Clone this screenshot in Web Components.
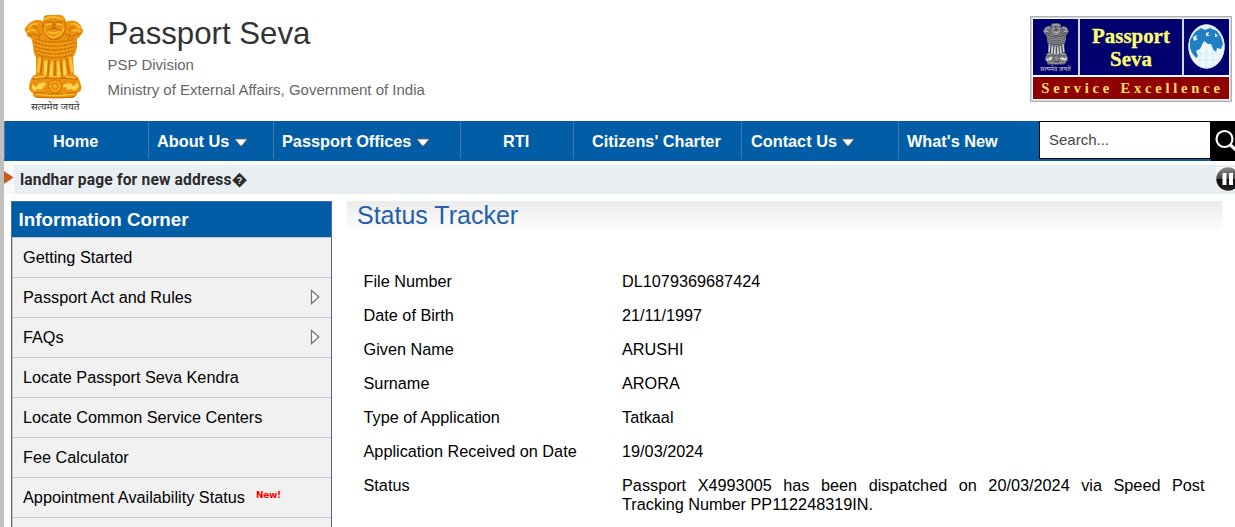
<!DOCTYPE html>
<html lang="en">
<head>
<meta charset="utf-8">
<title>Passport Seva</title>
<style>
    html, body { margin: 0; height: 100%; overflow: hidden; }
    body { background: #fff; font-family: "Liberation Sans", Arial, sans-serif; }
</style>
</head>
<body>
<passport-page>
    <site-header slot="header"></site-header>
    <site-nav slot="nav">
        <nav-item style="width:144px" pad="48">Home</nav-item>
        <nav-item style="width:125px" pad="8" menu>About Us</nav-item>
        <nav-item style="width:187px" pad="8" menu>Passport Offices</nav-item>
        <nav-item style="width:113px" pad="42">RTI</nav-item>
        <nav-item style="width:168px" pad="18">Citizens' Charter</nav-item>
        <nav-item style="width:157px" pad="9" menu>Contact Us</nav-item>
        <nav-item style="width:141px" pad="8">What's New</nav-item>
        <site-search slot="search"></site-search>
    </site-nav>
    <news-ticker slot="ticker">landhar page for new address�</news-ticker>
    <info-corner slot="side" heading="Information Corner">
        <info-link>Getting Started</info-link>
        <info-link more>Passport Act and Rules</info-link>
        <info-link more>FAQs</info-link>
        <info-link>Locate Passport Seva Kendra</info-link>
        <info-link>Locate Common Service Centers</info-link>
        <info-link>Fee Calculator</info-link>
        <info-link fresh>Appointment Availability Status</info-link>
        <info-link></info-link>
    </info-corner>
    <status-tracker slot="main">
        <status-row label="File Number">DL1079369687424</status-row>
        <status-row label="Date of Birth">21/11/1997</status-row>
        <status-row label="Given Name">ARUSHI</status-row>
        <status-row label="Surname">ARORA</status-row>
        <status-row label="Type of Application">Tatkaal</status-row>
        <status-row label="Application Received on Date">19/03/2024</status-row>
        <status-row label="Status">Passport X4993005 has been dispatched on 20/03/2024 via Speed Post Tracking Number PP112248319IN.</status-row>
    </status-tracker>
</passport-page>

<script>
// Small base class: every element renders its markup into an open shadow root
class SevaElement extends HTMLElement {
    connectedCallback() {
        if (!this.shadowRoot) {
            this.attachShadow({ mode: 'open' });
        }
        this.shadowRoot.innerHTML = this.render();
    }
}

class PassportPage extends SevaElement {
    render() {
        return `
            <style>
                :host { display: block; box-sizing: border-box; height: 527px; border-left: 4px solid #c1c0bf; overflow: hidden; }
                .content { display: flex; padding: 7px 13px 0 7px; gap: 15px; }
            </style>
            <slot name="header"></slot>
            <slot name="nav"></slot>
            <slot name="ticker"></slot>
            <div class="content"><slot name="side"></slot><slot name="main"></slot></div>
        `;
    }
}

// National emblem, gold by default; colours come from custom properties
class StateEmblem extends SevaElement {
    render() {
        return `
            <style>
                :host { display: block; }
                svg { display: block; width: 100%; height: 100%; }
                .b { fill: var(--emblem-base, #ea920d); }
                .l { fill: var(--emblem-light, #ffd44e); }
                .d { fill: var(--emblem-dark, #dc7c06); }
                .ls { fill: none; stroke: var(--emblem-light, #ffc437); stroke-linecap: round; }
                .ds { fill: none; stroke: var(--emblem-dark, #c96b04); stroke-linecap: round; }
            </style>
            <svg viewBox="0 0 60 86" preserveAspectRatio="none">
                <path class="b" d="M20 2 Q24 0 29 1 Q36 0 39 2 Q42 5 42 8 Q48 5 53 8 Q57 10 58 15 Q61 18 57 21 Q56 24 53 25 L53 34 Q52 40 49 44 L50 61 Q55 63 56 69 Q60 77 53 80 Q53 85 46 85 L14 85 Q8 84 9 80 Q3 77 6 69 Q7 63 12 61 L12 44 Q9 39 9 31 L7 24 Q2 23 3 20 Q-1 17 2 13 Q6 7 12 6 Q17 5 19 8 Z"/>
                <path class="ls" stroke-width="1.5" d="M5 14 Q8 9 13 10 M3 18 Q7 15 11 17 M47 10 Q53 9 56 15 M49 17 Q54 15 57 19 M21 5 Q29 1 38 5 M22 11 L27 10 M33 10 L38 11 M25 18 Q30 21 35 18 M20 14 Q21 22 29 24 Q38 22 40 14"/>
                <path class="ds" stroke-width="1.1" d="M19 8 Q18 20 26 25 Q31 28 37 23 Q43 18 41 8 M22 8 L28 8 M32 8 L38 8 M30 8 L28 14 L32 14 L30 9 M24 16 Q30 14 36 16 M8 20 Q14 24 18 20 M41 20 Q48 25 53 20 M9 12 L13 14 M50 13 L46 14 M5 20 L7 22 M54 21 L57 19"/>
                <path class="ds" stroke-width="1.2" stroke-dasharray="1.5 1.8" d="M12 25 Q22 31 49 26 M11 29 Q30 36 50 29 M11 33 Q30 40 50 33 M12 37 Q30 44 50 37 M14 41 Q30 47 48 41 M14 16 L16 26 M46 16 L44 26"/>
                <path class="ls" stroke-width=".6" stroke-dasharray="1.5 2.2" d="M13 27 Q30 34 49 28 M12 31 Q30 38 49 31 M13 35 Q30 42 49 35 M14 39 Q30 45 48 39 M13 18 L18 24 M46 18 L43 24"/>
                <path class="ls" stroke-width="3" d="M16 45 L14 58 M22 48 L21 61 M28 49 L27 62 M34 49 L35 62 M40 48 L41 61 M46 45 L48 58"/>
                <path class="l" d="M20 50 L22 46 L23 58 L20 62 Z M27 50 L29 62 L25 62 Z M34 50 L37 62 L33 62 Z M40 48 L43 60 L39 62 Z"/>
                <path class="ds" stroke-width="1.5" d="M18 43 L17 60 M25 47 L24 62 M31 48 L31 63 M37 47 L38 62 M43 45 L45 60"/>
                <path class="ds" stroke-width="1.3" d="M9 66 Q30 63 53 66"/>
                <path class="ls" stroke-width="1.4" d="M11 64.5 L20 63.5 M25 63.5 L36 63.5 M42 63.5 L51 64.5 M12 81 Q30 84 50 81"/>
                <circle class="d" cx="31" cy="73" r="7"/>
                <circle class="ls" cx="31" cy="73" r="5" stroke-width="1.1"/>
                <path class="ls" stroke-width=".7" d="M31 68 V78 M26 73 H36 M27.5 69.5 L34.5 76.5 M34.5 69.5 L27.5 76.5"/>
                <path class="l" d="M8 71 L12 74 L15 70 L21 69 L22 72 L19 74 L18 77 L14 76 L10 78 L8 75 Z M40 71 L46 70 L50 73 L53 69 L55 73 L51 78 L47 76 L43 77 L43 74 L39 74 Z"/>
                <path class="ds" stroke-width="1" d="M10 80 L20 80 M24 81 L38 81 M42 80 L52 80 M12 84 Q30 86 50 84"/>
            </svg>
        `;
    }
}

class SevaBadge extends SevaElement {
    render() {
        return `
            <style>
                :host { display: block; box-sizing: border-box; width: 202px; height: 86px; border: 1px solid #aeb0b4; outline: 1px solid #d5d5d8; outline-offset: -2px; padding: 2px; background: #fff; font-family: "Liberation Serif", serif; font-weight: bold; color: #ffff70; }
                .top { display: grid; grid-template-columns: 45px 102px 45px; gap: 2px; height: 56px; background: #d5d5ea; }
                .cell { background: #00006e; display: flex; flex-direction: column; align-items: center; }
                state-emblem { width: 26px; height: 42px; margin-top: 4px; --emblem-base: #777780; --emblem-light: #ddd; --emblem-dark: #3a3a42; }
                .motto { font: 6.3px/8px "Noto Sans", sans-serif; color: #ccc; white-space: nowrap; }
                .name { display: flex; flex-direction: column; align-items: center; font-size: 22px; line-height: 20px; gap: 4px; padding-top: 7px; -webkit-text-stroke: .3px #ffff70; }
                .name span { display: block; height: 20px; transform: scaleX(.95); white-space: nowrap; }
                .name span:last-child { transform: translateY(-1px) scaleX(.95); }
                .strip { height: 22px; margin-top: 2px; background: #900000; color: #ffe066; font-size: 14.5px; line-height: 22px; letter-spacing: 3.8px; text-align: center; white-space: nowrap; text-indent: 3px; }
                svg { width: 37px; height: 45px; margin-top: 5px; }
            </style>
            <div class="top">
                <div class="cell"><state-emblem></state-emblem><div class="motto">सत्यमेव जयते</div></div>
                <div class="cell"><div class="name"><span>Passport</span><span>Seva</span></div></div>
                <div class="cell">
                    <svg viewBox="0 0 37 45" preserveAspectRatio="none">
                        <ellipse cx="18.5" cy="22.5" rx="18" ry="22" fill="#edf7fd"/>
                        <path fill="#1f7fc2" d="M7 8 L13 4 L17 6 L22 4 L29 7 L33 13 L35 20 L33 25 L29 24 L28 28 L25 25 L23 20 L20 20 L16 17 L14 21 L12 25 L8 27 L10 32 L8 34 L4 29 L2 24 L2 16 Z"/>
                        <path fill="#edf7fd" d="M5 13 L9 11 L8 14 L10 15 L6 17 Z M18 9 L21 8 L20 11 L22 12 L18 12 Z M27 9 L30 12 L27 13 Z"/>
                        <path fill="none" stroke="#b9ddf2" stroke-width=".5" d="M11 30 H34 M10 36 H31 M18.5 23 V44 M12 27 V43 M25 27 V43"/>
                        <ellipse cx="18.5" cy="22.5" rx="17.7" ry="21.7" fill="none" stroke="#cfe6f4" stroke-width="1"/>
                    </svg>
                </div>
            </div>
            <div class="strip">Service Excellence</div>
        `;
    }
}

class SiteHeader extends SevaElement {
    render() {
        return `
            <style>
                :host { display: flex; box-sizing: border-box; height: 121px; padding: 14px 3px 0 20px; align-items: flex-start; }
                .crest { width: 62px; display: flex; flex-direction: column; align-items: flex-start; }
                state-emblem { width: 60px; height: 85px; }
                .motto { font: 10px/14px "Noto Sans", sans-serif; color: #333; white-space: nowrap; margin: 0 0 0 7px; }
                .titles { flex: 1; padding-left: 21.5px; color: #666; font-size: 15px; }
                h1 { margin: 0 0 -2px; font-size: 31.2px; line-height: 40px; font-weight: normal; color: #333; }
                p { margin: 0; line-height: 25px; }
                seva-badge { margin-top: 2px; }
            </style>
            <div class="crest"><state-emblem></state-emblem><div class="motto">सत्यमेव जयते</div></div>
            <div class="titles">
                <h1>Passport Seva</h1>
                <p>PSP Division</p>
                <p>Ministry of External Affairs, Government of India</p>
            </div>
            <seva-badge></seva-badge>
        `;
    }
}

class SiteNav extends SevaElement {
    render() {
        return `
            <style>
                :host { display: flex; height: 40px; background: #005da6; overflow: hidden; }
            </style>
            <slot></slot><slot name="search"></slot>
        `;
    }
}

class NavItem extends SevaElement {
    render() {
        const arrow = `<svg width="14" height="9" viewBox="0 0 14 9"><path d="M.8 1H13.2L7.8 7.8H6.2Z" fill="#fff" stroke="#666" stroke-width=".9"/></svg>`;
        return `
            <style>
                :host { display: flex; flex: none; box-sizing: border-box; height: 38px; border-left: 1px solid #4577a8; padding-left: ${this.getAttribute('pad')}px; padding-top: 3px; align-items: center; color: #fff; font-size: 16.3px; font-weight: bold; white-space: nowrap; }
                svg { margin: 2px 0 0 4.5px; }
            </style>
            <slot></slot>${this.hasAttribute('menu') ? arrow : ''}
        `;
    }
}

class SiteSearch extends SevaElement {
    render() {
        return `
            <style>
                :host { display: flex; flex: none; }
                .field { box-sizing: border-box; width: 172px; height: 38px; border: 1px solid #000; background: #fff; padding-left: 9px; line-height: 36px; font-size: 15px; color: #444; }
                .button { width: 32px; height: 40px; background: #000; }
                svg { display: block; margin: 8px 0 0 4px; }
            </style>
            <div class="field">Search...</div>
            <div class="button"><svg width="24" height="24" fill="none" stroke="#fff"><circle cx="9.5" cy="10" r="8" stroke-width="2.2"/><path d="M15.5 16L22 22" stroke-width="3.2"/></svg></div>
        `;
    }
}

class NewsTicker extends SevaElement {
    render() {
        return `
            <style>
                :host { display: flex; height: 29px; margin-top: 4px; background: #e9eef2; font: bold 15.6px/30px Roboto, sans-serif; letter-spacing: .15px; color: #2b2b2b; overflow: hidden; }
                .mark { width: 10px; background: #f8f8f8; }
                .text { flex: 1; padding-left: 6px; white-space: nowrap; }
                .pause { width: 19px; height: 26px; margin-top: 2px; overflow: hidden; }
                svg { display: block; }
            </style>
            <div class="mark"><svg width="10" height="29"><path d="M0 6L9.5 12.5L0 19Z" fill="#c75c22"/></svg></div>
            <div class="text"><slot></slot></div>
            <div class="pause"><svg width="24" height="26"><defs><linearGradient id="g" x2="0" y2="1"><stop stop-color="#8c8c8c"/><stop offset=".5" stop-color="#444"/><stop offset=".52" stop-color="#0b0b0b"/><stop offset="1" stop-color="#222"/></linearGradient></defs><path d="M0 0H24V12H0Z" fill="#f6f8f9"/><circle cx="12" cy="12" r="11.7" fill="url(#g)"/><path d="M6.5 6H10.5V18H6.5ZM13 6H17V18H13Z" fill="#fff"/></svg></div>
        `;
    }
}

class InfoCorner extends SevaElement {
    render() {
        return `
            <style>
                :host { display: block; flex: none; box-sizing: border-box; width: 321px; height: 340px; border: 1px solid #4a69a5; }
                h2 { margin: 0; height: 35px; padding-left: 6.5px; background: #005da6; color: #fff; font-size: 18.8px; line-height: 35px; }
            </style>
            <h2>${this.getAttribute('heading')}</h2>
            <slot></slot>
        `;
    }
}

class InfoLink extends SevaElement {
    render() {
        return `
            <style>
                :host { display: flex; box-sizing: border-box; height: 40px; border: 1px solid #c6c6c6; border-bottom: 0; border-right-width: 0; background: #f1f1f1; padding: 0 10px; align-items: center; font-size: 16.25px; color: #000; white-space: nowrap; }
                svg { margin: -2px 1px 0 auto; }
                .new { color: #f00; font: bold 9px/10px "DejaVu Sans", sans-serif; letter-spacing: -.25px; margin: -6px 0 0 11px; }
            </style>
            <slot></slot>
            ${this.hasAttribute('more') ? '<svg width="10" height="16"><path d="M1.5 1.5V14.5L8.8 8Z" fill="#fff" stroke="#777" stroke-width="1.3"/></svg>' : ''}
            ${this.hasAttribute('fresh') ? '<span class="new">New!</span>' : ''}
        `;
    }
}

class StatusTracker extends SevaElement {
    render() {
        return `
            <style>
                :host { display: block; flex: 1; }
                h1 { margin: 0 0 36px; height: 35px; padding-left: 10px; font-size: 25px; line-height: 29px; font-weight: normal; color: #235fae; background: linear-gradient(#ebebeb, #fff 32px); }
            </style>
            <h1>Status Tracker</h1>
            <slot></slot>
        `;
    }
}

class StatusRow extends SevaElement {
    render() {
        return `
            <style>
                :host { display: grid; grid-template-columns: 258.5px 582.5px; padding: 0 0 15px 16.5px; font-size: 16.25px; line-height: 19px; color: #000; }
                .value { text-align: justify; }
            </style>
            <div>${this.getAttribute('label')}</div>
            <div class="value"><slot></slot></div>
        `;
    }
}

// Register the custom elements
customElements.define('state-emblem', StateEmblem);
customElements.define('seva-badge', SevaBadge);
customElements.define('site-header', SiteHeader);
customElements.define('nav-item', NavItem);
customElements.define('site-search', SiteSearch);
customElements.define('site-nav', SiteNav);
customElements.define('news-ticker', NewsTicker);
customElements.define('info-link', InfoLink);
customElements.define('info-corner', InfoCorner);
customElements.define('status-row', StatusRow);
customElements.define('status-tracker', StatusTracker);
customElements.define('passport-page', PassportPage);
</script>
</body>
</html>
